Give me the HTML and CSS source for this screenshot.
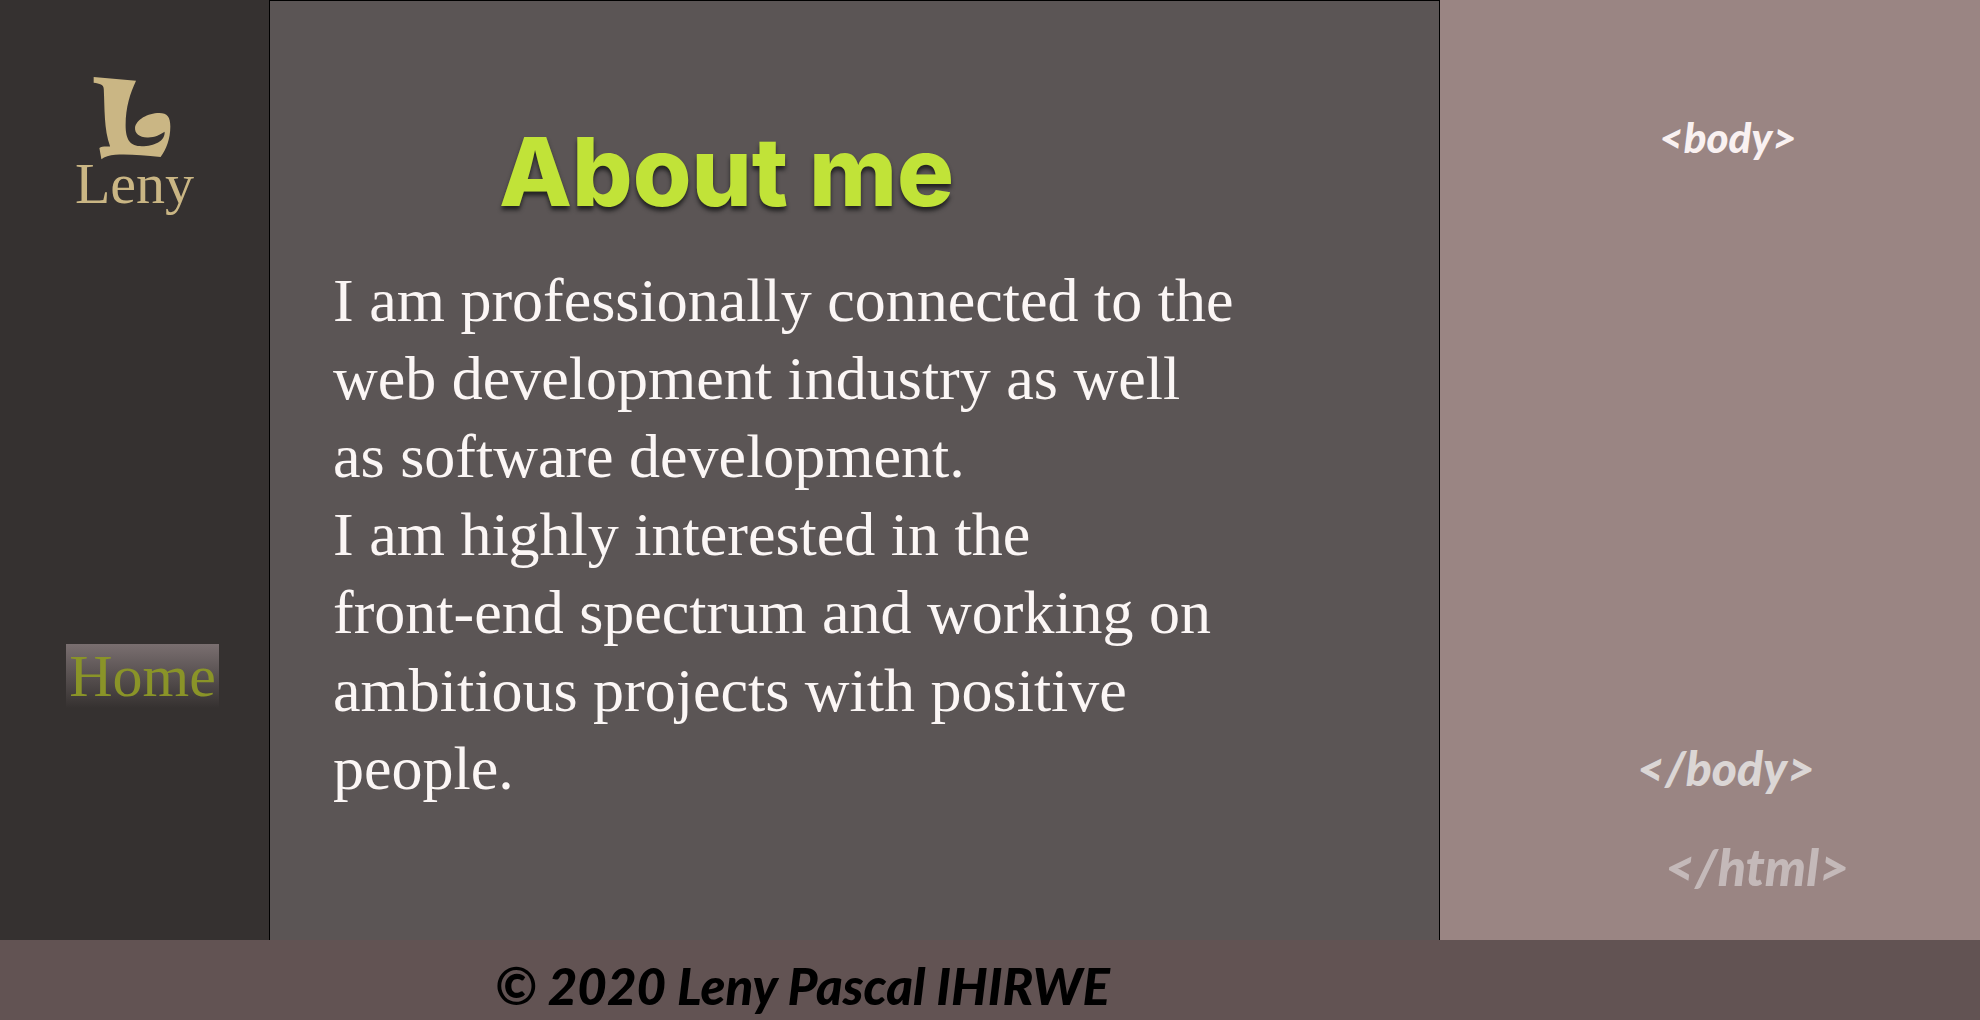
FILE: index.html
```
<!DOCTYPE html>
<html lang="en">
<head>
<meta charset="utf-8">
<title>About me - Leny</title>
<link rel="stylesheet" href="styles.css">
</head>
<body>
<div class="layout">
  <header class="sidebar">
    <div class="brand">
      <svg class="brand-mark" viewBox="0 0 232 248" aria-hidden="true">
        <path d="M2 2L128 13C111 49 97 91 97 145C97 190 111 208 145 208C183 208 215 193 213 165C200 174 182 183 161 182C138 181 124 170 125 153C128 129 163 109 197 109C221 109 230 121 230 149C230 186 218 217 201 240C148 234 106 231 66 233C49 235 34 238 25 247L19 213C25 208 39 208 51 209C32 158 35 94 32 38C32 24 20 22 2 19Z"/>
      </svg>
      <span class="brand-name">Leny</span>
    </div>
    <nav class="nav"><a class="home" href="#">Home</a></nav>
  </header>
  <main class="about">
    <h1 class="title">About me</h1>
    <p class="text">I am professionally connected to the<br>web development industry as well<br>as software development.<br>I am highly interested in the<br>front-end spectrum and working on<br>ambitious projects with positive<br>people.</p>
  </main>
  <aside class="tags">
    <span class="tag tag-open">&lt;body&gt;</span>
    <span class="tag tag-body">&lt;/body&gt;</span>
    <span class="tag tag-html">&lt;/html&gt;</span>
  </aside>
</div>
<footer class="footer">© 2020 Leny Pascal IHIRWE</footer>
</body>
</html>
```
FILE: styles.css
```
* { box-sizing: border-box; }
body {
  margin: 0;
  min-height: 100vh;
  display: flex;
  flex-direction: column;
  background: #625353;
}
.layout {
  flex: 1;
  display: grid;
  grid-template-columns: 269fr 1171fr 540fr;
}
.sidebar {
  display: flex;
  flex-direction: column;
  align-items: center;
  padding-top: 76px;
  background: #353130;
  font-family: "Liberation Serif", serif;
  font-size: 58px;
  line-height: 64px;
}
.brand {
  display: flex;
  flex-direction: column;
  align-items: center;
  color: #cab684;
}
.brand-mark {
  width: 78px;
  height: 84px;
  margin-right: 4px;
  fill: currentColor;
}
.brand-name { margin-top: -8px; }
.nav { margin: 428px 0 0 16px; }
.home {
  display: block;
  padding: 0 3px;
  font-size: 60px;
  color: #8a9428;
  text-decoration: none;
  background: linear-gradient(#7a6f70, #353130);
}
.about {
  border: 1px solid #000;
  border-bottom: 0;
  padding: 112px 63px 0;
  background: #5b5555;
}
.title {
  margin: 0 0 30px;
  padding-left: 166px;
  font: 800 95px/118px "Inter", sans-serif;
  color: #c1e338;
  text-shadow: 0 4px 4px #222;
}
.text {
  margin: 0;
  font: 62px/78px "Liberation Serif", serif;
  color: #fbf6f5;
  white-space: nowrap;
}
.tags {
  display: flex;
  flex-direction: column;
  align-items: center;
  padding-top: 112px;
  background: #9a8583;
}
.tag { font: italic 900 42px/50px "Lato", sans-serif; color: #f9f1f1; }
.tag-open { margin-left: 36px; }
.tag-body { margin: 576px 0 0 32px; font-size: 48px; line-height: 60px; color: #dbd6d5; }
.tag-html { margin: 36px 0 0 94px; font-size: 52px; line-height: 64px; color: #c4b9b9; }
.footer {
  padding: 16px 0 4px 25%;
  font: italic 900 51px/60px "Lato", sans-serif;
  color: #000;
}
```
